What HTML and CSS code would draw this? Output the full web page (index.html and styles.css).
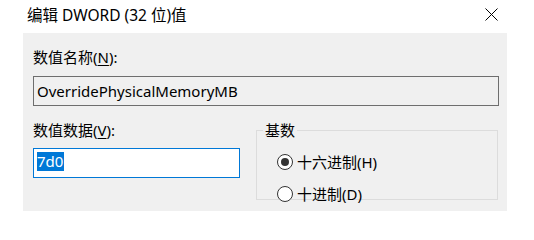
FILE: index.html
```html
<!DOCTYPE html>
<html lang="zh-CN">
<head>
<meta charset="utf-8">
<link rel="stylesheet" href="styles.css">
</head>
<body>
<div class="window">
  <div class="titlebar">
    <span class="title">编辑 DWORD (32 位)值</span>
    <span class="close">
      <svg width="13" height="13" viewBox="0 0 13 13"><path d="M0.5 0.5 L12.5 12.5 M12.5 0.5 L0.5 12.5" stroke="#000" stroke-width="1" fill="none"/></svg>
    </span>
  </div>
  <div class="panel">
    <div class="label">数值名称(<u>N</u>):</div>
    <div class="namebox">OverridePhysicalMemoryMB</div>
    <div class="row">
      <div class="col">
        <div class="label">数值数据(<u>V</u>):</div>
        <div class="databox"><span class="sel">7d0</span></div>
      </div>
      <fieldset class="group">
        <legend class="legend">基数</legend>
        <div class="radios">
          <div class="radio-row"><span class="radio checked"></span><span class="rtext">十六进制(H)</span></div>
          <div class="radio-row"><span class="radio"></span><span class="rtext">十进制(D)</span></div>
        </div>
      </fieldset>
    </div>
  </div>
</div>
</body>
</html>
```

FILE: styles.css
```css
* { box-sizing: border-box; }
html, body { margin: 0; padding: 0; background: #fff; }
body {
  font-family: "Noto Sans", "Noto Sans CJK SC", sans-serif;
  font-size: 15px;
  color: #000;
  width: 534px;
  height: 211px;
  overflow: hidden;
}
.titlebar {
  height: 33px;
  display: flex;
  align-items: center;
  justify-content: space-between;
  padding-left: 27px;
  padding-right: 36px;
}
.title { line-height: 20px; margin-top: -3px; font-size: 15.5px; }
.close { display: flex; margin-top: -5px; }
.panel {
  margin-left: 23px;
  width: 484px;
  height: 178px;
  background: #f0f0f0;
  padding: 14px 8px 0 10px;
}
.label { line-height: 20px; height: 20px; }
.label u { text-underline-offset: 2px; }
.namebox {
  margin-top: 9px;
  height: 30px;
  border: 1px solid #6e6e6e;
  padding-left: 3px;
  line-height: 28px;
}
.row {
  margin-top: 14px;
  display: flex;
  gap: 16px;
}
.col { width: 207px; }
.databox {
  margin-top: 8px;
  height: 30px;
  border: 1px solid #0078d7;
  background: #fff;
  padding: 2px 0 0 3px;
}
.sel {
  display: inline-block;
  background: #0078d7;
  color: #fff;
  height: 19px;
  line-height: 19px;
  padding: 0 1px 0 0;
}
.group {
  margin: 0;
  width: 242px;
  height: 80px;
  border: 1px solid #dcdcdc;
  padding: 0;
}
.legend {
  margin-left: 6px;
  padding: 0 2px;
  line-height: 20px;
}
.radios { padding: 6px 0 0 21px; }
.radio-row {
  height: 32px;
  display: flex;
  align-items: center;
}
.radio {
  width: 16px;
  height: 16px;
  border: 1px solid #333;
  border-radius: 50%;
  background: #fff;
  display: flex;
  align-items: center;
  justify-content: center;
  margin-right: 4px;
  margin-left: -1px;
}
.radio.checked::after {
  content: "";
  width: 8px;
  height: 8px;
  border-radius: 50%;
  background: #333;
}
.rtext { line-height: 20px; }
```
